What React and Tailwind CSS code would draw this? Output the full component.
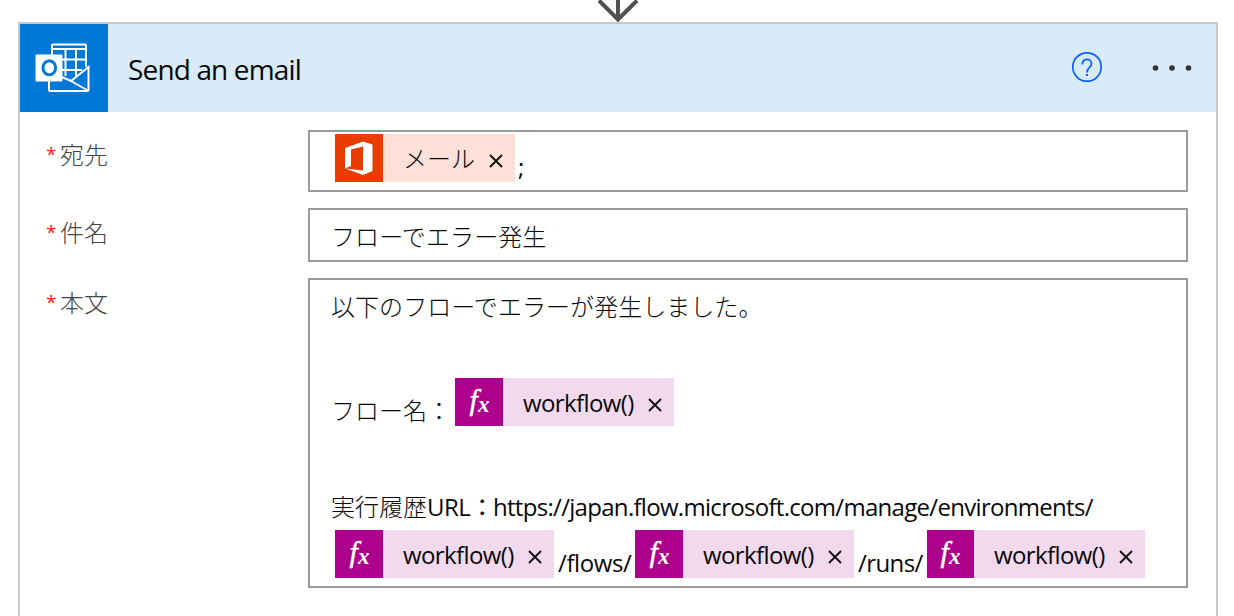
import React from "react";

const CloseMark = () => (
  <svg width="14" height="14" viewBox="0 0 14 14" fill="none" stroke="#111" strokeWidth="1.900" className="mt-[5px] shrink-0">
    <path d="M1 1 L13 13 M13 1 L1 13" />
  </svg>
);

const Expression = ({ width = "w-[219px]", icon = "w-12" }) => (
  <span className={`flex h-12 shrink-0 bg-[#f2d9ed] ${width}`}>
    <span className={`flex h-12 shrink-0 items-center justify-center bg-[#ad008c] ${icon}`}>
      <svg width="47" height="48" viewBox="0 0 47 48" fill="#fff" fontFamily="'Liberation Serif', serif" fontStyle="italic">
        <text x="13.500" y="32" fontSize="30" fontWeight="400" stroke="#fff" strokeWidth="0.5">f</text>
        <text x="22" y="34" fontSize="23" fontWeight="700">x</text>
      </svg>
    </span>
    <span className="flex flex-1 items-center justify-between pr-[12px] pl-[20px]">
      <span className="pt-[2px] tracking-[-0.6px]">workflow()</span>
      <CloseMark />
    </span>
  </span>
);

const Field = ({ label, className, children }) => (
  <div className="flex items-start">
    <div className="flex w-[288px] shrink-0 items-start pt-[7px] pl-[26px] leading-[36px] text-[#444]">
      <span className="w-[14px] text-[19px] leading-[34px] text-[#f02020]">*</span>
      <span className="font-light">{label}</span>
    </div>
    <div className={`w-[880px] border-2 border-[#999] ${className}`}>{children}</div>
  </div>
);

const OutlookIcon = () => (
  <svg width="88" height="88" viewBox="0 0 88 88" fill="none" stroke="#fff" strokeWidth="2">
    <path d="M32 31V21.5Q32 20.5 33 20.5H65Q66 20.5 66 21.5V43M32 25H66M45.500 25V52M56 25V53M42 35.500H66M42 46H62" />
    <path d="M29 57V65.5Q29 67 30.500 67H67Q68.500 67 68.500 65.500V43L51 57L42 53M51 57L67 66" />
    <rect x="15.500" y="30.500" width="27" height="27" rx="1" fill="#fff" stroke="none" />
    <ellipse cx="29.300" cy="43.800" rx="6.300" ry="7" stroke="#0078d7" strokeWidth="3" />
  </svg>
);

export default function App() {
  return (
    <div className="flex h-[616px] w-[1234px] flex-col overflow-hidden bg-white font-['Open_Sans','Noto_Sans_CJK_JP',sans-serif] text-[24px] text-[#080808]">
      <div className="flex h-[22px] shrink-0 pl-[597px]">
        <svg width="42" height="22" viewBox="0 0 42 22" fill="none" stroke="#505050" strokeWidth="4">
          <path d="M21 0V19M2 0.500L21 19.500L40 0.500" />
        </svg>
      </div>
      <div className="ml-[18px] h-[620px] w-[1200px] shrink-0 border-2 border-[#c8c8c8]">
        <header className="flex h-[88px] items-center bg-[#d9eaf8]">
          <div className="h-[88px] w-[88px] bg-[#0078d7]"><OutlookIcon /></div>
          <h1 className="flex-1 pt-px pl-[20px] text-[28px] tracking-[-0.85px]">Send an email</h1>
          <svg width="32" height="32" viewBox="0 0 32 32" fill="none" stroke="#0b5fff" strokeWidth="1.700" className="mr-[47px]">
            <circle cx="16" cy="15" r="14.200" />
            <path d="M11.300 12.500C11.300 5.800 20.500 6 20.500 11.500C20.500 15.500 16 15.500 16 20.500" />
            <path d="M15 23H17" strokeWidth="2" />
          </svg>
          <svg width="42" height="8" viewBox="0 0 42 8" fill="#333" className="mr-[24px]">
            <circle cx="5.500" cy="4" r="2.800" /><circle cx="22" cy="4" r="2.800" /><circle cx="38.500" cy="4" r="2.800" />
          </svg>
        </header>
        <main className="flex flex-col gap-4 pt-[18px]">
          <Field label="宛先" className="h-[62px]">
            <div className="flex pt-[2px] pl-[25px]">
              <span className="flex h-12 w-[180px] bg-[#fde0d8]">
                <svg width="48" height="48" viewBox="0 0 48 48" className="shrink-0 bg-[#eb3c00]">
                  <path fillRule="evenodd" fill="#fff" d="M10 14L28 7.500L37.500 10.500V37L28 41L10 34.500L28 36.500V12.500L16 15.500V32L10 34.500Z" />
                </svg>
                <span className="flex flex-1 items-center justify-between pr-[12px] pl-[20px]">
                  <span className="pt-[2px] font-light">メール</span><CloseMark />
                </span>
              </span>
              <span className="pt-[15px] pl-[3px] leading-[36px]">;</span>
            </div>
          </Field>
          <Field label="件名" className="h-[54px]">
            <div className="pt-[9px] pl-[21px] leading-[36px] font-light tracking-[0.1px]">フローでエラー発生</div>
          </Field>
          <Field label="本文" className="h-[310px]">
            <div className="h-[98px] pt-[9px] pl-[21px] leading-[36px] font-light tracking-[0.05px]">以下のフローでエラーが発生しました。</div>
            <div className="flex h-[108px] items-start pl-[21px]">
              <span className="w-[124px] pt-[15px] leading-[36px] font-light whitespace-nowrap">フロー名：</span>
              <Expression />
            </div>
            <div className="flex h-[44px] pt-[3px] pl-[21px] leading-[36px] whitespace-nowrap">
              <span className="font-light">実行履歴</span>
              <span className="w-[66px] tracking-[-0.5px]">URL：</span>
              <span className="tracking-[-0.7px]">https://japan.flow.microsoft.com/manage/environments/</span>
            </div>
            <div className="flex items-start pl-[25px]">
              <Expression />
              <span className="w-[81px] pt-[15px] pl-[4px] leading-[36px] tracking-[-0.4px]">/flows/</span>
              <Expression />
              <span className="w-[73px] pt-[15px] pl-[4px] leading-[36px] tracking-[-0.6px]">/runs/</span>
              <Expression width="w-[218px]" icon="w-[47px]" />
            </div>
          </Field>
        </main>
      </div>
    </div>
  );
}
